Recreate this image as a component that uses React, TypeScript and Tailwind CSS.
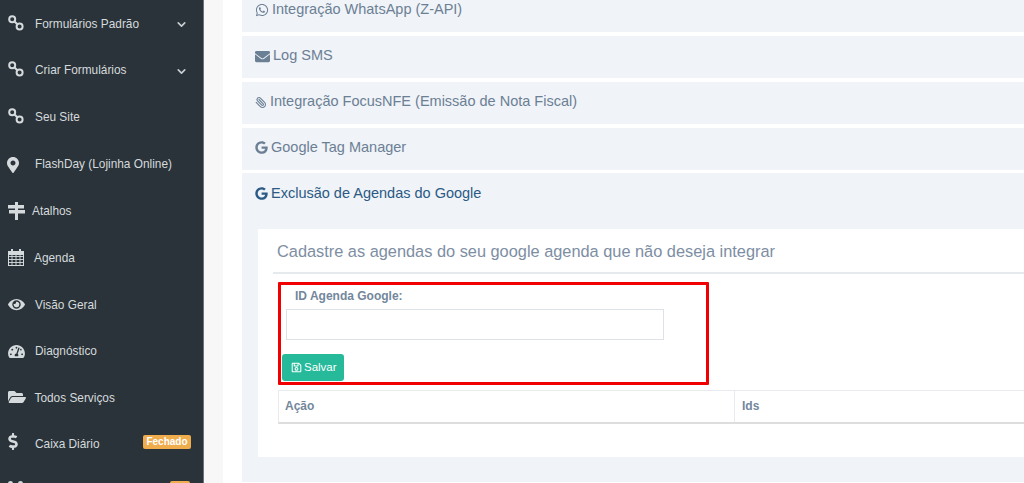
import { ChevronDown, Paperclip } from 'lucide-react';
import { FaWhatsapp, FaEnvelope, FaGoogle, FaMapMarkerAlt, FaEye, FaTachometerAlt, FaFolderOpen, FaDollarSign, FaRegSave } from 'react-icons/fa';
import type { ReactNode } from 'react';

const LinkRings = () => (
  <svg viewBox="0 0 16 16" className="w-[16px] h-[16px] -translate-y-[2px]" fill="none" stroke="currentColor" strokeWidth="2">
    <circle cx="4.2" cy="4.2" r="3" />
    <circle cx="11.6" cy="11.4" r="3" />
    <path d="M6.5 6.5l2.8 2.8" />
  </svg>
);

const Signpost = () => (
  <svg viewBox="0 0 17 18" className="w-[17px] h-[18px] -translate-y-[1px]" fill="currentColor">
    <path d="M7 0h3v3h6v3.5H10V8h7v3.5H10V18H7v-6.5H1V8h6V6.5H0V3h7z" />
  </svg>
);

const CalendarGrid = () => (
  <svg viewBox="0 0 16 18" className="w-[16px] h-[18px] -translate-y-[2px]" fill="none" stroke="currentColor">
    <path fill="currentColor" stroke="none" d="M0 3h3V1h2v2h6V1h2v2h3v4H0z" />
    <rect x="0.5" y="5" width="15" height="12.5" />
    <path d="M0 8.5h16M0 11.5h16M0 14.5h16M4 6v12M8 6v12M12 6v12" strokeWidth="0.9" />
  </svg>
);

const navItems: { label: string; icon: ReactNode; chevron?: boolean; badge?: string; gap?: string; h: string }[] = [
  { label: 'Formulários Padrão', icon: <LinkRings />, chevron: true, h: 'h-[47px]' },
  { label: 'Criar Formulários', icon: <LinkRings />, chevron: true, h: 'h-[46px]' },
  { label: 'Seu Site', icon: <LinkRings />, h: 'h-[47px]' },
  { label: 'FlashDay (Lojinha Online)', icon: <FaMapMarkerAlt className="w-[12px] h-[16px] -ml-[1px]" />, h: 'h-[47px]' },
  { label: 'Atalhos', icon: <Signpost />, gap: 'w-[24px]', h: 'h-[48px]' },
  { label: 'Agenda', icon: <CalendarGrid />, gap: 'w-[26px]', h: 'h-[46px]' },
  { label: 'Visão Geral', icon: <FaEye className="w-[17px] h-[15px] -translate-y-[1px]" />, h: 'h-[47px]' },
  { label: 'Diagnóstico', icon: <FaTachometerAlt className="w-[17px] h-[15px] -translate-y-[1px]" />, h: 'h-[46px]' },
  { label: 'Todos Serviços', icon: <FaFolderOpen className="w-[18px] h-[16px] -translate-y-[2px]" />, gap: 'w-[26.5px]', h: 'h-[47px]' },
  { label: 'Caixa Diário', icon: <FaDollarSign className="w-[10px] h-[17px] -translate-y-[3px]" />, badge: 'Fechado', h: 'h-[45px]' },
];

const panels = [
  { label: 'Integração WhatsApp (Z-API)', icon: <FaWhatsapp className="w-[14px] h-[14px]" /> },
  { label: 'Log SMS', icon: <FaEnvelope className="w-[15px] h-[15px]" /> },
  { label: 'Integração FocusNFE (Emissão de Nota Fiscal)', icon: <Paperclip className="w-[12px] h-[15px] -scale-x-100" strokeWidth={2.2} /> },
  { label: 'Google Tag Manager', icon: <FaGoogle className="w-[13px] h-[13px] -translate-y-[1px]" /> },
];

export default function App() {
  return (
    <div className="flex w-[1024px] h-[483px] overflow-hidden bg-white font-['Liberation_Sans',Arial,sans-serif]">
      {/* Sidebar */}
      <aside className="w-[204px] shrink-0 bg-[#2a3339] border-r border-[#6b7479] text-[#d5dadd] text-[11.85px] flex flex-col pt-[1px]">
        {navItems.map((item) => (
          <div key={item.label} className={`${item.h} shrink-0 flex items-center pl-[8px] pr-[15px]`}>
            <span className={`${item.gap ?? 'w-[27px]'} shrink-0 flex items-center`}>{item.icon}</span>
            <span className="flex-1">{item.label}</span>
            {item.chevron && <ChevronDown className="w-[13px] h-[13px] text-[#c8ced2]" strokeWidth={3} />}
            {item.badge && (
              <span className="w-[48px] text-center bg-[#f0ad4e] text-white text-[10px] font-bold rounded-[2px] h-[14px] leading-[13px] -mt-[6px] -mr-[3px]">
                {item.badge}
              </span>
            )}
          </div>
        ))}
        <div className="flex items-start pl-[8px] pr-[13px] pt-[14px]">
          <span className="w-[5px] h-[5px] rounded-full bg-[#d5dadd]" />
          <span className="ml-[5px] w-[5px] h-[5px] rounded-full bg-[#d5dadd]" />
          <span className="ml-auto w-[20px] h-[6px] bg-[#f0ad4e] rounded-t-[2px]" />
        </div>
      </aside>

      {/* Gutter */}
      <div className="w-[19px] shrink-0 bg-[#f7f7f7]" />

      {/* Content */}
      <main className="flex-1 min-w-0 pl-[19px] flex flex-col gap-[4px] -mt-[10px]">
        {panels.map((p) => (
          <div key={p.label} className="h-[42px] shrink-0 bg-[#f0f3f7] flex items-center gap-[3px] pl-[13px] pb-[2px] text-[14.5px] text-[#6b7f95]">
            {p.icon}
            <span>{p.label}</span>
          </div>
        ))}
        <section className="shrink-0 bg-[#f0f3f7] h-[309px] -mt-[1px]">
          <div className="h-[42px] flex items-center gap-[3px] pl-[13px] text-[14.5px] text-[#2a5a85]">
            <FaGoogle className="w-[13px] h-[13px] -translate-y-[1px]" />
            <span>Exclusão de Agendas do Google</span>
          </div>
          <div className="ml-[16px] mt-[14px] h-[228px] bg-white pt-[12px] pl-[15px] text-[#73879c]">
            <h2 className="text-[16.35px] leading-[20px] text-[#7d8ea3] pl-[4px]">
              Cadastre as agendas do seu google agenda que não deseja integrar
            </h2>
            <div className="mt-[11px] border-t-2 border-[#e6e9ed] pt-[8px]">
              <div className="w-[431px] h-[103px] border-[3px] border-[#f00000] rounded-[1px] ml-[5px] pl-[5px]">
                <label className="block pl-[9px] pt-[4px] text-[12px] font-bold leading-[15px]">ID Agenda Google:</label>
                <div className="mt-[5px] w-[378px] h-[31px] border border-[#dde2e8] bg-white" />
                <button className="mt-[14px] -ml-[4px] w-[62px] flex items-center gap-[2px] h-[27px] pl-[9px] rounded-[3px] bg-[#26b99a] text-white text-[11.5px]">
                  <FaRegSave className="w-[11px] h-[11px]" />
                  Salvar
                </button>
              </div>
              <div className="mt-[5px] ml-[5px] h-[34px] border border-r-0 border-[#e8eaed] border-b-2 border-b-[#dddddd] flex items-center text-[12px] font-bold">
                <div className="w-[456px] h-full flex items-center pl-[6px] pb-[1px] border-r border-[#e8eaed]">Ação</div>
                <div className="pl-[7px] pb-[1px]">Ids</div>
              </div>
            </div>
          </div>
        </section>
      </main>
    </div>
  );
}
